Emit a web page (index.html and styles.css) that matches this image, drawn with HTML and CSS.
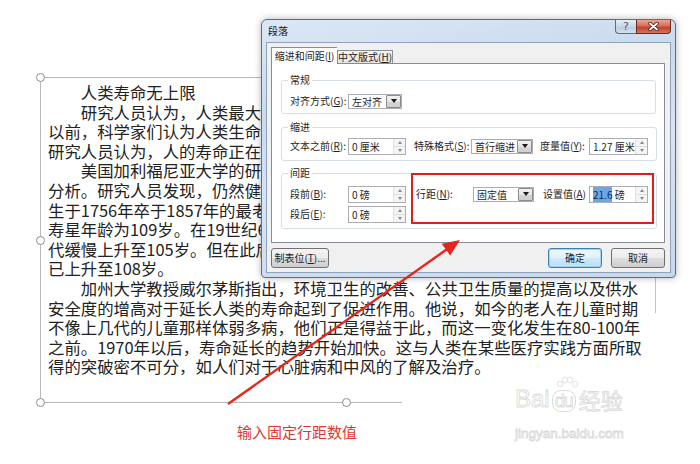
FILE: index.html
```html
<!DOCTYPE html>
<html lang="zh-CN">
  <head>
    <meta charset="UTF-8" />
    <title>段落 - 输入固定行距数值</title>
    <link rel="stylesheet" href="styles.css">
  </head>
  <body>
    <div class="shot">
      <!-- 文本框的边框和控制点 -->
      <div class="frame"></div>
      <div class="frame-bottom"></div>
      <div class="frame-right"></div>
      <span class="handle" style="left: 40px; top: 77px"></span>
      <span class="handle" style="left: 40px; top: 240px"></span>
      <span class="handle" style="left: 40px; top: 402px"></span>
      <span class="handle" style="left: 346px; top: 402px"></span>

      <!-- 被对话框挡住的部分只保留露出来的字 -->
      <div class="doc">
        <p class="para">人类寿命无上限</p>
        <p class="para">研究人员认为，人类最大<br>以前，科学家们认为人类生命<br>研究人员认为，人的寿命正在</p>
        <p class="para">美国加利福尼亚大学的研<br>分析。研究人员发现，仍然健<br>生于1756年卒于1857年的最老<br>寿星年龄为109岁。在19世纪6<br>代缓慢上升至105岁。但在此后<br>已上升至108岁。</p>
        <p class="para">加州大学教授威尔茅斯指出，环境卫生的改善、公共卫生质量的提高以及供水<br>安全度的增高对于延长人类的寿命起到了促进作用。他说，如今的老人在儿童时期<br>不像上几代的儿童那样体弱多病，他们正是得益于此，而这一变化发生在80-100年<br>之前。1970年以后，寿命延长的趋势开始加快。这与人类在某些医疗实践方面所取<br>得的突破密不可分，如人们对于心脏病和中风的了解及治疗。</p>
      </div>

      <p class="caption">输入固定行距数值</p>

      <div class="dialog">
        <div class="titlebar">
          <span class="title">段落</span>
          <div class="caption-btns">
            <span class="cbtn help">?</span>
            <span class="cbtn close">
              <svg width="11" height="9" viewBox="0 0 11 9">
                <path d="M2 1.5 L9 7.5 M9 1.5 L2 7.5" stroke="#4a1c14" stroke-width="3.4" stroke-linecap="round" />
                <path d="M2 1.5 L9 7.5 M9 1.5 L2 7.5" stroke="#fff" stroke-width="1.8" stroke-linecap="round" />
              </svg>
            </span>
          </div>
        </div>

        <div class="client">
          <div class="tabs">
            <span class="tab active">缩进和间距(<u>I</u>)</span>
            <span class="tab">中文版式(<u>H</u>)</span>
          </div>

          <div class="panel">
            <fieldset class="group g-general">
              <legend>常规</legend>
              <div class="row">
                <span class="lbl w58">对齐方式(<u>G</u>):</span>
                <span class="combo w54"><span class="val">左对齐</span><span class="drop"></span></span>
              </div>
            </fieldset>

            <fieldset class="group g-indent">
              <legend>缩进</legend>
              <div class="row">
                <span class="lbl w58">文本之前(<u>R</u>):</span>
                <span class="spin w58"><span class="val">0 厘米</span><span class="arrows"><i class="up"></i><i class="down"></i></span></span>
                <span class="lbl w57 ml8">特殊格式(<u>S</u>):</span>
                <span class="combo w62"><span class="val">首行缩进</span><span class="drop"></span></span>
                <span class="lbl w49 ml7">度量值(<u>Y</u>):</span>
                <span class="spin w59"><span class="val">1.27 厘米</span><span class="arrows"><i class="up"></i><i class="down"></i></span></span>
              </div>
            </fieldset>

            <fieldset class="group g-spacing">
              <legend>间距</legend>
              <div class="row">
                <span class="lbl w58">段前(<u>B</u>):</span>
                <span class="spin w58"><span class="val">0 磅</span><span class="arrows"><i class="up"></i><i class="down"></i></span></span>
                <span class="lbl w57 ml10">行距(<u>N</u>):</span>
                <span class="combo w61"><span class="val">固定值</span><span class="drop"></span></span>
                <span class="lbl w46 ml9">设置值(<u>A</u>)</span>
                <span class="spin w59"><span class="val"><span class="sel">21.6</span> 磅</span><span class="arrows"><i class="up"></i><i class="down"></i></span></span>
              </div>
              <div class="row">
                <span class="lbl w58">段后(<u>E</u>):</span>
                <span class="spin w58"><span class="val">0 磅</span><span class="arrows"><i class="up"></i><i class="down"></i></span></span>
              </div>
            </fieldset>
          </div>

          <div class="footer">
            <span class="btn w58">制表位(<u>T</u>)...</span>
            <span class="btn default w54 push">确定</span>
            <span class="btn w54">取消</span>
          </div>
        </div>

        <!-- 标注框 -->
        <div class="mark"></div>
      </div>

      <svg class="arrow" width="700" height="464" viewBox="0 0 700 464">
        <line x1="228" y1="404" x2="448" y2="248.5" stroke="#e4261c" stroke-width="2.4" />
        <polygon points="460,240 450.2,255.6 441.8,243.8" fill="#e4261c" />
      </svg>

      <div class="watermark">
        <div class="wm-logo">
          <span>Bai</span>
          <span class="wm-du">
            <svg class="paw" width="24" height="14" viewBox="0 0 24 14">
              <ellipse cx="5" cy="8" rx="2.5" ry="3" />
              <ellipse cx="10" cy="4" rx="2.5" ry="3" />
              <ellipse cx="15" cy="4" rx="2.5" ry="3" />
              <ellipse cx="20" cy="8" rx="2.5" ry="3" />
            </svg>du</span>
          <span>经验</span>
        </div>
        <div class="wm-url">jingyan.baidu.com</div>
      </div>
    </div>
  </body>
</html>
```

FILE: styles.css
```css
* {
  margin: 0;
  padding: 0;
  box-sizing: border-box;
}

body {
  background: #fff;
  font-family: "Noto Sans CJK SC", "Liberation Sans", sans-serif;
}

.shot {
  position: relative;
  width: 700px;
  height: 464px;
  overflow: hidden;
}

/* 文档区 */

.frame {
  position: absolute;
  left: 40px;
  top: 77px;
  width: 612px;
  height: 325px;
  border-top: 1px solid #b9b9b9;
  border-left: 1px solid #b9b9b9;
}

.frame-bottom {
  position: absolute;
  left: 40px;
  top: 402px;
  width: 362px;
  height: 1px;
  background: #b9b9b9;
}

.frame-right {
  position: absolute;
  left: 655px;
  top: 278px;
  width: 1px;
  height: 35px;
  background: #c4c4c4;
}

.handle {
  position: absolute;
  width: 9px;
  height: 9px;
  margin: -4px 0 0 -4px;
  border: 1.5px solid #8c8c8c;
  border-radius: 50%;
  background: #fff;
}

.doc {
  padding: 83px 0 0 48px;
  font-size: 16.4px;
  line-height: 19.6px;
  color: #222;
  white-space: nowrap;
}

.para {
  text-indent: 2em;
}

.caption {
  margin-top: 45px;
  padding-left: 237px;
  font-size: 15px;
  line-height: 20px;
  color: #dc3a2f;
}

/* 段落对话框 */

.dialog {
  position: absolute;
  left: 261px;
  top: 19px;
  width: 415px;
  height: 259px;
  display: flex;
  flex-direction: column;
  border: 1px solid #5d6d82;
  border-radius: 6px 6px 4px 4px;
  background: linear-gradient(170deg, #dbe7f5 0%, #c9daee 30%, #d6e4f4 55%, #c6d8ee 100%);
  box-shadow: 0 0 7px rgba(0, 0, 0, 0.3);
  font-size: 10px;
  line-height: 14px;
  color: #1e1e1e;
}

.titlebar {
  height: 22px;
  display: flex;
  align-items: flex-start;
  padding: 0 4px 0 6px;
}

.title {
  margin-top: 4px;
  color: #111;
}

.caption-btns {
  margin-left: auto;
  display: flex;
}

.cbtn {
  height: 14px;
  display: flex;
  align-items: center;
  justify-content: center;
  border: 1px solid #5c6b7f;
  border-top: none;
}

.help {
  width: 21px;
  border-radius: 0 0 0 4px;
  border-right: none;
  background: linear-gradient(#e5edf6, #cad7e6 50%, #bccbde 51%, #d3e0ee);
  color: #4c5b70;
  font: 11px/1 "DejaVu Sans", sans-serif;
}

.close {
  width: 35px;
  border-radius: 0 0 4px 0;
  border-color: #6b2a1f;
  background: linear-gradient(#e8a493, #d7705c 45%, #c5402a 55%, #d8735f);
}

.client {
  flex: 1;
  margin: 0 4px 4px;
  padding: 4px 5px 4px 4px;
  border: 1px solid #8fa2b8;
  background: #f0f0f0;
  display: flex;
  flex-direction: column;
}

.tabs {
  height: 16px;
  display: flex;
  align-items: flex-end;
}

.tab {
  height: 13px;
  width: 56px;
  border: 1px solid #898c95;
  border-bottom: none;
  background: linear-gradient(#f3f3f3, #e3e3e3);
  text-align: center;
  line-height: 12px;
  white-space: nowrap;
}

.tab.active {
  height: 17px;
  width: 66px;
  margin-bottom: -1px;
  border-right: none;
  background: #fff;
  position: relative;
  line-height: 15px;
}

.panel {
  height: 180px;
  padding: 9px 8px 0 9px;
  border: 1px solid #898c95;
  background: #fff;
}

.group {
  border: 1px solid #d5dfe5;
  border-radius: 3px;
  padding: 4px 8px 2px;
}

.group legend {
  padding: 0 2px;
  margin-left: -2px;
  line-height: 14px;
}

.g-indent {
  margin-top: 6px;
  padding: 2px 8px 4px;
}

.g-spacing {
  margin-top: 5px;
  padding: 4px 8px 4px;
}

.row {
  height: 20px;
  display: flex;
  align-items: center;
}

.lbl {
  white-space: nowrap;
}

.w46 { width: 46px; }
.w49 { width: 49px; }
.w54 { width: 54px; }
.w57 { width: 57px; }
.w58 { width: 58px; }
.w59 { width: 59px; }
.w61 { width: 61px; }
.w62 { width: 62px; }
.ml7 { margin-left: 7px; }
.ml8 { margin-left: 8px; }
.ml9 { margin-left: 9px; }
.ml10 { margin-left: 10px; }

.spin {
  height: 17px;
  display: flex;
  border: 1px solid #abadb3;
  background: #fff;
}

.val {
  flex: 1;
  min-width: 0;
  padding-left: 3px;
  line-height: 15px;
  white-space: nowrap;
  overflow: hidden;
}

.sel {
  background: #6aa6e8;
  color: #0d2a58;
}

.arrows {
  width: 12px;
  flex: none;
  display: flex;
  flex-direction: column;
  border-left: 1px solid #e2e2e2;
  background: #f4f4f4;
}

.arrows i {
  flex: 1;
  display: flex;
  align-items: center;
  justify-content: center;
}

.arrows i + i {
  border-top: 1px solid #e2e2e2;
}

.arrows i::before {
  content: "";
  border-left: 2.5px solid transparent;
  border-right: 2.5px solid transparent;
}

.arrows .up::before {
  border-bottom: 3px solid #8a8a8a;
}

.arrows .down::before {
  border-top: 3px solid #8a8a8a;
}

.combo {
  height: 15px;
  display: flex;
  border: 1px solid #abadb3;
  background: #fff;
}

.combo .val {
  line-height: 13px;
}

.drop {
  width: 15px;
  flex: none;
  display: flex;
  align-items: center;
  justify-content: center;
  border: 1px solid #8b8b8b;
  border-radius: 1px;
  background: linear-gradient(#f2f2f2, #e4e4e4 50%, #d6d6d6 51%, #cfcfcf);
}

.drop::before {
  content: "";
  border-left: 3.5px solid transparent;
  border-right: 3.5px solid transparent;
  border-top: 4px solid #1a1a1a;
}

.footer {
  margin-top: 5px;
  height: 20px;
  display: flex;
  gap: 9px;
}

.btn {
  height: 20px;
  border: 1px solid #707070;
  border-radius: 3px;
  background: linear-gradient(#f4f4f4, #ebebeb 50%, #dddddd 51%, #cfcfcf);
  text-align: center;
  line-height: 18px;
  white-space: nowrap;
}

.btn.default {
  border-color: #3c7fb1;
  background: linear-gradient(#eef7fd, #e3f2fc 50%, #cfe9f9 51%, #bddff5);
  box-shadow: inset 0 0 0 1px #9cd4f4;
}

.push {
  margin-left: auto;
}

.mark {
  position: absolute;
  left: 149px;
  top: 153px;
  width: 243px;
  height: 51px;
  border: 2px solid #e31d1d;
}

/* 箭头与水印 */

.arrow {
  position: absolute;
  left: 0;
  top: 0;
}

.watermark {
  position: absolute;
  left: 515px;
  top: 386px;
  color: #fff;
  -webkit-text-stroke: 0.8px #d9d9d9;
}

.wm-logo {
  display: flex;
  align-items: flex-end;
  font: 24px/26px "Liberation Sans", sans-serif;
}

.wm-logo span:last-child {
  margin-left: 3px;
  font: 22px/26px "Noto Sans CJK SC", sans-serif;
}

.wm-du {
  position: relative;
  margin-left: 2px;
  padding: 0 2px;
  border: 1px solid #dcdcdc;
  border-radius: 9px;
  font-size: 18px;
  line-height: 20px;
  letter-spacing: -1px;
}

.paw {
  position: absolute;
  left: 2px;
  top: -15px;
  fill: #fff;
  stroke: #dadada;
  stroke-width: 0.8;
}

.wm-url {
  margin-top: 14px;
  font: 13.5px/16px "Liberation Sans", sans-serif;
}
```
